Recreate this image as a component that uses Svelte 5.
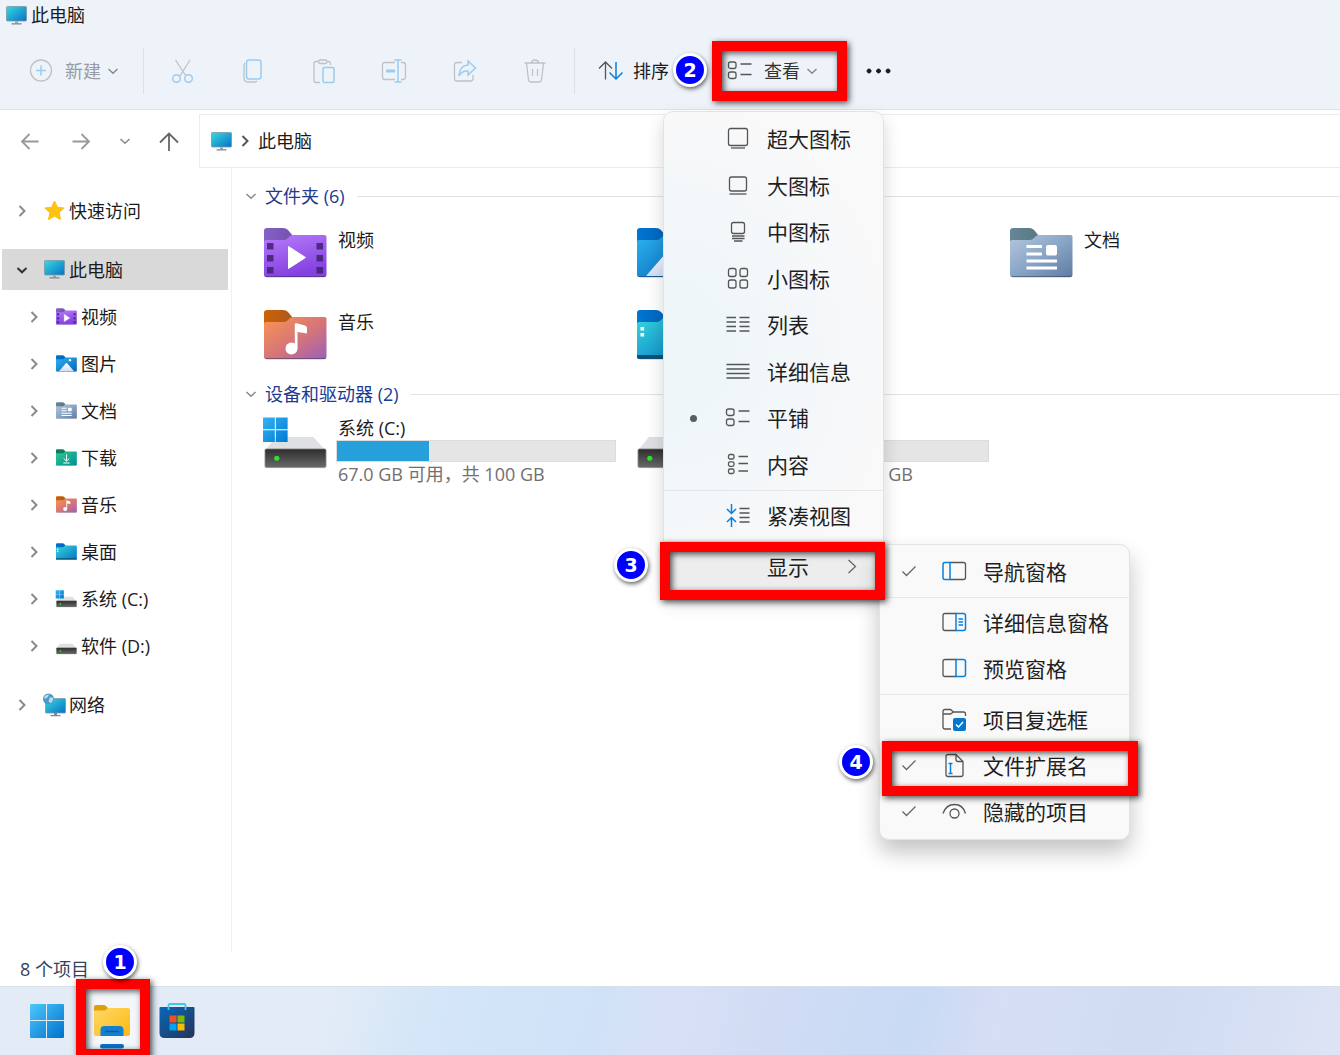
<script lang="ts">
	interface TreeItem {
		icon: string;
		label: string;
	}

	interface MenuItem {
		icon: string;
		label: string;
		mark?: string;
		step?: number;
	}

	const tools = [
		{ icon: 'cut', label: '剪切' },
		{ icon: 'copy', label: '复制' },
		{ icon: 'paste', label: '粘贴' },
		{ icon: 'rename', label: '重命名' },
		{ icon: 'share', label: '共享' },
		{ icon: 'trash', label: '删除' }
	];

	const tree: TreeItem[] = [
		{ icon: 'video', label: '视频' },
		{ icon: 'picture', label: '图片' },
		{ icon: 'document', label: '文档' },
		{ icon: 'download', label: '下载' },
		{ icon: 'music', label: '音乐' },
		{ icon: 'desktop', label: '桌面' },
		{ icon: 'system', label: '系统 (C:)' },
		{ icon: 'drive', label: '软件 (D:)' }
	];

	const folders: TreeItem[] = [
		{ icon: 'video', label: '视频' },
		{ icon: 'picture', label: '图片' },
		{ icon: 'document', label: '文档' },
		{ icon: 'music', label: '音乐' },
		{ icon: 'desktop', label: '桌面' }
	];

	const drives = [
		{ icon: 'system', label: '系统 (C:)', used: 33, info: '67.0 GB 可用，共 100 GB' },
		{ icon: 'drive', label: '软件 (D:)', used: 1, info: '137 GB 可用，共 137 GB' }
	];

	const layouts: MenuItem[] = [
		{ icon: 'xlarge', label: '超大图标' },
		{ icon: 'large', label: '大图标' },
		{ icon: 'medium', label: '中图标' },
		{ icon: 'small', label: '小图标' },
		{ icon: 'list', label: '列表' },
		{ icon: 'details', label: '详细信息' },
		{ icon: 'tiles', label: '平铺', mark: 'dot' },
		{ icon: 'content', label: '内容' }
	];

	const showGroups: MenuItem[][] = [
		[{ icon: 'navpane', label: '导航窗格', mark: 'check' }],
		[
			{ icon: 'detailpane', label: '详细信息窗格' },
			{ icon: 'preview', label: '预览窗格' }
		],
		[
			{ icon: 'checkbox', label: '项目复选框' },
			{ icon: 'extension', label: '文件扩展名', mark: 'check', step: 4 },
			{ icon: 'eye', label: '隐藏的项目', mark: 'check' }
		]
	];
</script>

{#snippet chevron(dir: string)}
	<svg class="chevron" viewBox="0 0 12 12" width="12" height="12">
		{#if dir === 'down'}
			<path d="M1.5 4L6 8.3L10.5 4" />
		{:else}
			<path d="M3.5 1L8.5 6L3.5 11" />
		{/if}
	</svg>
{/snippet}

{#snippet monitor()}
	<svg class="monitor" viewBox="0 0 21 19" width="21" height="19">
		<rect x="0.5" y="0.5" width="20" height="14.5" rx="0.8" fill="url(#screen)" stroke="#7d98a6" stroke-width="0.8" />
		<path d="M9 15.4h3v2h-3z" fill="#9aa3aa" />
		<path d="M5.5 17.2h10v1.3h-10z" fill="#7c8890" />
	</svg>
{/snippet}

{#snippet fileIcon(name: string)}
	{#if name === 'system' || name === 'drive'}
		<svg class="file" viewBox="0 0 64 52">
			<path d="M12 21H50L63 35H1Z" fill="#dfe0e4" />
			<rect x="1" y="33" width="62" height="19" rx="1.5" fill="url(#disk)" stroke="#8b8b8b" stroke-width="0.8" />
			<circle cx="13" cy="42.500" r="2.600" fill="#2fe02f" />
			{#if name === 'system'}
				<path d="M-1 1H11V13H-1ZM12 1H24V13H12ZM-1 14H11V26H-1ZM12 14H24V26H12Z" fill="url(#win)" />
			{/if}
		</svg>
	{:else}
		<svg class="file" viewBox="0 0 63 50">
			<path d="M0 3Q0 0 3 0H19Q22 0 24 2L29 8V16H0Z" fill="url(#tab-{name})" />
			<path
				d="M0 13.500Q0 12 2 12H20C24 12 25 7 29 7H60.500Q62.500 7 62.500 9V46.500Q62.500 49 60 49H2.500Q0 49 0 46.500Z"
				fill="url(#body-{name})"
			/>
			<path d="M0.500 47Q1 49.300 3 49.300H60Q62 49.300 62.300 47Q62 48.200 60 48.200H3Q1 48.200 0.500 47Z" fill="#24304a" opacity="0.6" />
			{#if name === 'video'}
				<path d="M24.500 18.500L41.500 29.500L24.500 40.500Z" fill="#fff" stroke="#fff" stroke-linejoin="round" />
				<path
					d="M3 15h6.500v6.500H3zM3 27h6.500v6.500H3zM3 39h6.500v6.500H3zM52.500 15H59v6.500h-6.500zM52.500 27H59v6.500h-6.500zM52.500 39H59v6.500h-6.500z"
					fill="#42216f"
					opacity="0.85"
				/>
			{:else if name === 'picture'}
				<path d="M9 48L29 25Q31.500 22.500 34 25L54 48Z" fill="url(#peak)" />
				<circle cx="42" cy="15" r="3.500" fill="#fff" />
			{:else if name === 'document'}
				<path d="M16.500 17h15.500v3H16.500zM16.500 24.500h15.500v3H16.500zM16.500 31.500h30.500v3H16.500zM16.500 38.500h30.500v3H16.500z" fill="#fff" />
				<rect x="36" y="17" width="11" height="10.500" rx="2" fill="#fff" />
			{:else if name === 'download'}
				<path d="M31.500 16V35M23 28L31.500 36L40 28M22 41.500H41" fill="none" stroke="#fff" stroke-width="3" />
			{:else if name === 'music'}
				<circle cx="27.500" cy="38.500" r="6" fill="#fff" />
				<path d="M30.800 14Q31 13 32.500 13.300L41 15.500Q43 16 43 18V23.500L33.500 22V38.500H30.800Z" fill="#fff" />
			{:else if name === 'desktop'}
				<path d="M3.500 17h3.600v3.600H3.500zM3.500 23h3.600v3.600H3.500z" fill="#fff" />
				<path d="M0 45H62.500V46.500Q62.500 49 60 49H2.500Q0 49 0 46.500Z" fill="#0d5276" />
			{/if}
		</svg>
	{/if}
{/snippet}

{#snippet glyph(name: string)}
	<svg class="glyph" viewBox="0 0 26 26" width="26" height="26">
		{#if name === 'new'}
			<circle cx="13" cy="12.500" r="10.500" />
			<path class="accent" d="M13 7.500V17.500M8 12.500H18" />
		{:else if name === 'cut'}
			<path d="M5.500 2L16 18M20 2L10 18" />
			<circle class="accent" cx="6.500" cy="20.500" r="3.800" />
			<circle class="accent" cx="18.500" cy="20.500" r="3.800" />
		{:else if name === 'copy'}
			<path d="M5 5Q4 6 4 8V20Q4 24 8 24H14Q16 24 17 23" />
			<rect class="accent" x="6.500" y="2" width="14.500" height="19" rx="2.500" />
		{:else if name === 'paste'}
			<path d="M7.500 3.500H5Q3 3.500 3 5.500V22.500Q3 24.500 5 24.500H9M16 3.500H18Q19.500 3.500 19.500 5.500V7" />
			<rect x="7.500" y="2" width="8.500" height="3.500" rx="1.700" />
			<rect class="accent" x="12" y="9.500" width="11" height="15" rx="1.500" />
		{:else if name === 'rename'}
			<path d="M14 4.500H4Q1.500 4.500 1.500 7V19Q1.500 21.500 4 21.500H14M20 4.500H22Q24.500 4.500 24.500 7V19Q24.500 21.500 22 21.500H20" />
			<path class="accent" d="M17 2V24M13.500 2H20.500M13.500 24H20.500" />
			<path class="accent thick" d="M5 13H14" />
		{:else if name === 'share'}
			<path d="M10 4.500H5Q2.500 4.500 2.500 7V20.500Q2.500 23 5 23H18.500Q21 23 21 20.500V17" />
			<path class="accent" d="M16 3L23.500 10L16 17V13Q10 12.500 7 18Q7.500 7.500 16 7Z" />
		{:else if name === 'trash'}
			<path d="M2.500 5H23.500M9.500 4.500Q10 2 13 2Q16 2 16.500 4.500M4.500 5L6.500 22Q6.800 24 9 24H17Q19.200 24 19.500 22L21.500 5M10.500 11V18M15.500 11V18" />
		{:else if name === 'sort'}
			<path d="M7.500 21.500V4M1 10.500L7.500 4L14 10.500" />
			<path class="accent" d="M18 4V21M11.500 14.500L18 21L24.500 14.500" />
		{:else if name === 'tiles'}
			<rect x="1.500" y="4" width="7.500" height="6.500" rx="2" />
			<rect x="1.500" y="14" width="7.500" height="6.500" rx="2" />
			<path d="M13.500 6H24.500M13.500 16.500H24.500" />
		{:else if name === 'xlarge'}
			<rect x="3.500" y="2.500" width="19" height="17" rx="2" />
			<path d="M6 22H20" />
		{:else if name === 'large'}
			<rect x="4.500" y="4" width="17" height="14" rx="2" />
			<path d="M4.500 21H21.500" />
		{:else if name === 'medium'}
			<rect x="6.500" y="3.500" width="13" height="11" rx="2" />
			<path d="M7 17H19.500M7 19.500H19.500M9 22H17.500" />
		{:else if name === 'small'}
			<rect x="3.500" y="2.500" width="7.500" height="8" rx="2" />
			<rect x="15" y="2.500" width="7.500" height="8" rx="2" />
			<rect x="3.500" y="14" width="7.500" height="8" rx="2" />
			<rect x="15" y="14" width="7.500" height="8" rx="2" />
		{:else if name === 'list'}
			<path d="M1.500 5.500H11M14.500 5.500H24.500M1.500 10H11M14.500 10H24.500M1.500 14.500H11M14.500 14.500H24.500M1.500 19H11M14.500 19H24.500" />
		{:else if name === 'details'}
			<path d="M1.500 5.500H24.500M1.500 10H24.500M1.500 14.500H24.500M1.500 19H24.500" />
		{:else if name === 'content'}
			<rect x="3.500" y="2.500" width="5.500" height="4.500" rx="1.500" />
			<rect x="3.500" y="9.800" width="5.500" height="4.500" rx="1.500" />
			<rect x="3.500" y="17" width="5.500" height="4.500" rx="1.500" />
			<path d="M13.500 4.500H23M13.500 11.500H23M13.500 19H23" />
		{:else if name === 'compact'}
			<path class="accent" d="M6.500 1V10M2 6L6.500 10.500L11 6M6.500 24V15M2 19L6.500 14.500L11 19" />
			<path d="M14.500 5.500H24.500M14.500 10H24.500M14.500 14.500H24.500M14.500 19H24.500" />
		{:else if name === 'navpane'}
			<path d="M9 3.500H22.500Q24.500 3.500 24.500 5.500V18.500Q24.500 20.500 22.500 20.500H9" />
			<path class="accent" d="M9 3.500V20.500H4Q2 20.500 2 18.500V5.500Q2 3.500 4 3.500Z" />
		{:else if name === 'preview' || name === 'detailpane'}
			<path d="M15 3.500H4Q2 3.500 2 5.500V18.500Q2 20.500 4 20.500H15" />
			<path class="accent" d="M15 3.500H22.500Q24.500 3.500 24.500 5.500V18.500Q24.500 20.500 22.500 20.500H15Z" />
			{#if name === 'detailpane'}
				<path class="accent" d="M17.500 9H22M17.500 12H22M17.500 15H22" />
			{/if}
		{:else if name === 'checkbox'}
			<path d="M10 22H4Q2 22 2 20V4.500Q2 2.500 4 2.500H9.500L12.500 5H22.500Q24.500 5 24.500 7V9M2 7H9.500L12.500 5" />
			<rect x="12" y="11" width="13" height="13" rx="2" fill="#0078d4" stroke="none" />
			<path d="M15 17.500L17.500 20L22 15" class="inverse" />
		{:else if name === 'extension'}
			<path d="M15 1.500H7Q5 1.500 5 3.500V21.500Q5 23.500 7 23.500H20Q22 23.500 22 21.500V8.500L15 1.500V6.500Q15 8.500 17 8.500H22" />
			<path class="accent" d="M9.500 10.500V20.500M7.500 10.500H11.500M7.500 20.500H11.500" />
		{:else if name === 'eye'}
			<path d="M2 14.500Q5 5.500 13.500 5.500Q22 5.500 24.500 14.500" />
			<circle cx="13.500" cy="14.500" r="4.500" />
		{:else if name === 'back'}
			<path d="M21.500 13.500H5M12.500 6L5 13.500L12.500 21" />
		{:else if name === 'forward'}
			<path d="M4.500 13.500H21M13.500 6L21 13.500L13.500 21" />
		{:else if name === 'up'}
			<path d="M13 23V5.500M4 14.500L13 5.500L22 14.500" />
		{:else if name === 'more'}
			<path class="solid" d="M3 11a2 2 0 1 0 .1 0zM12.500 11a2 2 0 1 0 .1 0zM22 11a2 2 0 1 0 .1 0z" />
		{/if}
	</svg>
{/snippet}

{#snippet menuRow(item: MenuItem)}
	<button class="menu-item" role="menuitem">
		<span class="mark">
			{#if item.mark === 'dot'}
				<i class="dot"></i>
			{:else if item.mark === 'check'}
				<svg viewBox="0 0 16 16" width="16" height="16"><path d="M1.500 7.500L5.500 11.500L14.500 2.500" /></svg>
			{/if}
		</span>
		{@render glyph(item.icon)}
		<span>{item.label}</span>
	</button>
{/snippet}

<svg class="defs" width="0" height="0" aria-hidden="true">
	<defs>
		<linearGradient id="screen" x1="0" y1="0" x2="1" y2="1"><stop stop-color="#36dbe0" /><stop offset="1" stop-color="#0870c4" /></linearGradient>
		<linearGradient id="disk" x1="0" y1="0" x2="0" y2="1"><stop stop-color="#2d2d2d" /><stop offset="1" stop-color="#6a6a6a" /></linearGradient>
		<linearGradient id="win" x1="0" y1="0" x2="1" y2="1"><stop stop-color="#35b5f2" /><stop offset="1" stop-color="#0078d4" /></linearGradient>
		<linearGradient id="peak" x1="0" y1="0" x2="0" y2="1"><stop stop-color="#fff" /><stop offset="1" stop-color="#d3def5" /></linearGradient>
		<linearGradient id="tab-video"><stop stop-color="#8362c6" /><stop offset="1" stop-color="#7950ad" /></linearGradient>
		<linearGradient id="body-video" x1="0" y1="0" x2="0.3" y2="1"><stop stop-color="#b57bfa" /><stop offset="1" stop-color="#8541e0" /></linearGradient>
		<linearGradient id="tab-picture"><stop stop-color="#0075d2" /><stop offset="1" stop-color="#0664ba" /></linearGradient>
		<linearGradient id="body-picture" x1="0" y1="0" x2="1" y2="1"><stop stop-color="#2bb2f0" /><stop offset="1" stop-color="#0a63b8" /></linearGradient>
		<linearGradient id="tab-document"><stop stop-color="#668797" /><stop offset="1" stop-color="#597682" /></linearGradient>
		<linearGradient id="body-document" x1="0" y1="0" x2="1" y2="1"><stop stop-color="#b5c6dc" /><stop offset="0.5" stop-color="#89a6c7" /><stop offset="1" stop-color="#5f7ba2" /></linearGradient>
		<linearGradient id="tab-download"><stop stop-color="#0d7d5c" /><stop offset="1" stop-color="#0d7d5c" /></linearGradient>
		<linearGradient id="body-download" x1="0" y1="0" x2="1" y2="1"><stop stop-color="#35c78e" /><stop offset="1" stop-color="#008f94" /></linearGradient>
		<linearGradient id="tab-music"><stop stop-color="#cb6308" /><stop offset="1" stop-color="#ad5a19" /></linearGradient>
		<linearGradient id="body-music" x1="0" y1="0" x2="1" y2="1"><stop stop-color="#fb954f" /><stop offset="0.55" stop-color="#d4747a" /><stop offset="1" stop-color="#9b60b8" /></linearGradient>
		<linearGradient id="tab-desktop"><stop stop-color="#0075d2" /><stop offset="1" stop-color="#0664ba" /></linearGradient>
		<linearGradient id="body-desktop" x1="0" y1="0" x2="1" y2="1"><stop stop-color="#34d7dc" /><stop offset="1" stop-color="#0873c4" /></linearGradient>
		<linearGradient id="start" x1="0" y1="0" x2="1" y2="1"><stop stop-color="#4cc9fb" /><stop offset="1" stop-color="#0070cc" /></linearGradient>
		<linearGradient id="yellow" x1="0" y1="0" x2="1" y2="1"><stop stop-color="#ffd968" /><stop offset="1" stop-color="#fbb912" /></linearGradient>
		<linearGradient id="bag" x1="0" y1="0" x2="1" y2="1"><stop stop-color="#0868b8" /><stop offset="1" stop-color="#263258" /></linearGradient>
	</defs>
</svg>

<div class="screen" lang="zh-CN">
	<header class="window-head">
		<div class="title">{@render monitor()}<span>此电脑</span></div>
		<div class="toolbar">
			<button class="tool disabled">
				{@render glyph('new')}<span>新建</span>{@render chevron('down')}
			</button>
			<i class="divider"></i>
			<div class="tool-group disabled">
				{#each tools as tool}
					<button class="tool" aria-label={tool.label}>{@render glyph(tool.icon)}</button>
				{/each}
			</div>
			<i class="divider"></i>
			<button class="tool sort">{@render glyph('sort')}<span>排序</span></button>
			<div class="view">
				<button class="tool">
					{@render glyph('tiles')}<span>查看</span>{@render chevron('down')}
				</button>
				<div class="frame frame-view"></div>
				<b class="badge badge-view">2</b>

				<div class="menu" role="menu">
					<div class="layouts">
						{#each layouts as item (item.icon)}
							{@render menuRow(item)}
						{/each}
					</div>
					<hr />
					{@render menuRow({ icon: 'compact', label: '紧凑视图' })}
					<hr />
					<div class="sub">
						<button class="menu-item active" role="menuitem">
							<span class="mark"></span>
							<span class="glyph"></span>
							<span class="grow">显示</span>
							<svg viewBox="0 0 14 16" width="14" height="16"><path d="M3.500 1L10.500 7.500L3.500 14" /></svg>
						</button>
						<div class="menu submenu" role="menu">
							{#each showGroups as group, i}
								{#if i > 0}<hr />{/if}
								{#each group as item (item.icon)}
									<div class="sub">
										{@render menuRow(item)}
										{#if item.step}
											<div class="frame frame-ext"></div>
											<b class="badge badge-ext">{item.step}</b>
										{/if}
									</div>
								{/each}
							{/each}
						</div>
						<div class="frame frame-show"></div>
						<b class="badge badge-show">3</b>
					</div>
				</div>
			</div>
			<button class="tool more" aria-label="更多">{@render glyph('more')}</button>
		</div>
	</header>

	<nav class="nav-row">
		<div class="nav-buttons">
			<button aria-label="后退">{@render glyph('back')}</button>
			<button aria-label="前进">{@render glyph('forward')}</button>
			<button class="recent" aria-label="最近">{@render chevron('down')}</button>
			<button class="up" aria-label="向上">{@render glyph('up')}</button>
		</div>
		<div class="address">
			{@render monitor()}
			{@render chevron('right')}
			<button>此电脑</button>
		</div>
	</nav>

	<main>
		<aside>
			<button class="tree-item">
				{@render chevron('right')}
				<svg class="star" viewBox="0 0 21 21" width="21" height="21">
					<path d="M10.500 1L13.400 7.200L20.200 8L15.200 12.700L16.500 19.600L10.500 16.200L4.500 19.600L5.800 12.700L0.800 8L7.600 7.200Z" fill="#ffc20e" stroke="#ffc20e" stroke-linejoin="round" />
				</svg>
				<span>快速访问</span>
			</button>
			<button class="tree-item selected">
				{@render chevron('down')}{@render monitor()}<span>此电脑</span>
			</button>
			<ul>
				{#each tree as item (item.icon)}
					<li>
						<button class="tree-item child">
							{@render chevron('right')}{@render fileIcon(item.icon)}<span>{item.label}</span>
						</button>
					</li>
				{/each}
			</ul>
			<button class="tree-item">
				{@render chevron('right')}
				<svg class="network" viewBox="0 0 24 24" width="24" height="24">
					<rect x="3.500" y="5.500" width="20" height="14.500" rx="0.8" fill="url(#screen)" stroke="#7d98a6" stroke-width="0.8" />
					<path d="M12 20h3v2h-3zM8.500 22h10v1.300h-10z" fill="#7c8890" />
					<circle cx="6.500" cy="6" r="5.500" fill="#4a9ac6" />
					<path d="M2 4Q4 1 7 1.500L6 4L3 6ZM8 4L11.500 5Q11 9 8.500 10.500L6.500 8Z" fill="#b9dcea" />
				</svg>
				<span>网络</span>
			</button>
		</aside>

		<section class="content">
			<h2>{@render chevron('down')}<span>文件夹 (6)</span></h2>
			<div class="grid folders">
				{#each folders as folder (folder.icon)}
					<div class="tile">
						{@render fileIcon(folder.icon)}
						<span class="name">{folder.label}</span>
					</div>
				{/each}
			</div>
			<h2>{@render chevron('down')}<span>设备和驱动器 (2)</span></h2>
			<div class="grid">
				{#each drives as drive (drive.icon)}
					<div class="tile drive">
						{@render fileIcon(drive.icon)}
						<div class="drive-info">
							<span class="name">{drive.label}</span>
							<div class="bar"><div class="used" style="width: {drive.used}%"></div></div>
							<span class="space">{drive.info}</span>
						</div>
					</div>
				{/each}
			</div>
		</section>
	</main>

	<footer class="status">8 个项目</footer>

	<div class="taskbar">
		<button aria-label="开始">
			<svg viewBox="0 0 36 36" width="36" height="36">
				<path d="M2 1H17V17H1V2Q1 1 2 1ZM18 1H34Q35 1 35 2V17H18ZM1 18H17V35H2Q1 35 1 34ZM18 18H35V34Q35 35 34 35H18Z" fill="url(#start)" />
			</svg>
		</button>
		<button class="running" aria-label="文件资源管理器">
			<svg viewBox="0 0 36 36" width="36" height="36">
				<path d="M0 6V4Q0 2 2 2H9.500Q11 2 12 3L14.500 5.500V10H0Z" fill="#dfa007" />
				<path d="M0 8.500Q0 7.500 1 7.500H11L14 5H34Q36 5 36 7V31Q36 33 34 33H2Q0 33 0 31Z" fill="url(#yellow)" />
				<path d="M6.500 33V27Q6.500 23 10.500 23H25.500Q29.500 23 29.500 27V33Z" fill="#1380cf" />
				<path d="M11 28.500H25" stroke="#0b5ba3" stroke-width="1.500" />
				<rect x="6" y="41" width="24" height="4.500" rx="2.200" fill="#0b70cb" />
			</svg>
			<i class="frame frame-task"></i>
			<b class="badge badge-task">1</b>
		</button>
		<button aria-label="应用商店">
			<svg viewBox="0 0 36 36" width="36" height="36">
				<path d="M0.500 5Q0.500 4 1.500 4H34.500Q35.500 4 35.500 5V30Q35.500 35 30.500 35H5.500Q0.500 35 0.500 30Z" fill="url(#bag)" />
				<path d="M9.500 7V2.500Q9.500 1 11 1H25Q26.500 1 26.500 2.500V7" fill="none" stroke="#3ccbf0" stroke-width="1.800" />
				<path d="M10.500 12.500h7v7h-7z" fill="#f25022" />
				<path d="M18.500 12.500h7v7h-7z" fill="#7fba00" />
				<path d="M10.500 20.500h7v7h-7z" fill="#00a4ef" />
				<path d="M18.500 20.500h7v7h-7z" fill="#ffb900" />
			</svg>
		</button>
	</div>
</div>

<style>
	:global(body) {
		margin: 0;
	}

	.screen {
		display: flex;
		flex-direction: column;
		min-height: 100vh;
		overflow: hidden;
		background: #fff;
		color: #1b1b1b;
		font-family: 'Open Sans', 'Noto Sans CJK SC', sans-serif;
		font-size: 18px;
		line-height: 24px;
	}

	.defs {
		position: absolute;
	}

	button {
		display: flex;
		align-items: center;
		padding: 0;
		border: 0;
		background: none;
		color: inherit;
		font: inherit;
		text-align: left;
	}

	svg {
		flex: none;
		display: block;
		overflow: visible;
	}

	.glyph {
		flex: none;
		width: 26px;
		fill: none;
		stroke: #555;
		stroke-width: 1.3;
	}

	.glyph .accent {
		stroke: #0a7fdb;
		stroke-width: 1.5;
	}

	.glyph .thick {
		stroke-width: 3;
	}

	.glyph .inverse {
		stroke: #fff;
		stroke-width: 1.5;
	}

	.glyph .solid {
		fill: #1b1b1b;
		stroke: #1b1b1b;
		stroke-width: 1;
	}

	.chevron {
		fill: none;
		stroke: #8a8a8a;
		stroke-width: 1.5;
	}

	/* window head */
	.window-head {
		background: #eef3fa;
		border-bottom: 1px solid #dfe3e8;
	}

	.title {
		display: flex;
		align-items: center;
		gap: 4px;
		height: 30px;
		padding-left: 6px;
	}

	.toolbar {
		display: flex;
		align-items: center;
		box-sizing: border-box;
		height: 79px;
		padding: 2px 0 0 28px;
	}

	.tool {
		flex: none;
		gap: 11px;
	}

	.tool .chevron {
		margin-left: -5px;
	}

	.disabled {
		color: #989ba0;
	}

	.disabled .glyph {
		stroke: #bfc2c6;
	}

	.disabled .glyph .accent {
		stroke: #9accf0;
	}

	.divider {
		flex: none;
		width: 1px;
		height: 46px;
		margin: 0 24px;
		background: #dcdfe4;
	}

	.tool-group {
		display: flex;
		justify-content: space-between;
		flex: none;
		width: 378px;
		margin: 0 2px;
	}

	.sort {
		margin: 0 58px 0 -1px;
		gap: 9px;
	}

	.view {
		position: relative;
		display: flex;
		align-self: stretch;
		flex: none;
		color: #333;
	}

	.more {
		margin-left: 48px;
	}

	/* menus */
	.menu {
		position: absolute;
		z-index: 5;
		top: calc(100% + 2px);
		left: -64px;
		box-sizing: border-box;
		width: 221px;
		padding: 4px 0;
		border: 1px solid #e2e3e4;
		border-radius: 10px;
		background: radial-gradient(ellipse at 0 50%, #eff6f9 20%, #f9f9f9 75%);
		box-shadow: 0 8px 18px rgba(0, 0, 0, 0.16);
		color: #1f1f1f;
		font-size: 21px;
		line-height: 28px;
	}

	.submenu {
		top: 0;
		left: 215px;
		width: 251px;
		background: #f9f9f9;
		box-shadow: 0 12px 22px rgba(0, 0, 0, 0.24);
	}

	.layouts {
		display: grid;
		grid-auto-rows: 1fr;
		height: 372px;
	}

	.menu hr {
		margin: 2px 0;
		border: 0;
		border-top: 1px solid #e6e7e8;
	}

	.sub {
		position: relative;
	}

	.menu-item {
		width: 100%;
		height: 46px;
		padding-left: 19px;
		white-space: nowrap;
	}

	.menu-item .glyph {
		margin: 0 16px 0 22px;
	}

	.menu-item.active {
		padding-right: 24px;
		background: #ededed;
	}

	.menu-item > svg:last-child {
		fill: none;
		stroke: #666;
		stroke-width: 1.3;
	}

	.grow {
		flex: 1;
	}

	.mark {
		display: flex;
		justify-content: center;
		flex: none;
		width: 20px;
	}

	.mark svg {
		fill: none;
		stroke: #666;
		stroke-width: 1.3;
	}

	.dot {
		width: 7px;
		height: 7px;
		border-radius: 50%;
		background: #5c5c5c;
	}

	/* numbered step highlights */
	.frame {
		position: absolute;
		z-index: 6;
		box-sizing: border-box;
		border: 10px solid #f00;
		filter: drop-shadow(2px 2px 3px rgba(0, 0, 0, 0.7));
		pointer-events: none;
	}

	.badge {
		position: absolute;
		z-index: 7;
		box-sizing: border-box;
		width: 34px;
		height: 34px;
		border: 3px solid #fff;
		border-radius: 50%;
		background: #00f;
		box-shadow: 1px 2px 4px rgba(0, 0, 0, 0.6);
		color: #fff;
		font-family: 'DejaVu Sans', sans-serif;
		font-size: 19px;
		font-weight: 700;
		line-height: 28px;
		text-align: center;
	}

	.frame-view {
		top: 9px;
		left: -15px;
		width: 135px;
		height: 60px;
	}

	.badge-view {
		top: 21px;
		left: -54px;
	}

	.frame-show {
		top: -2px;
		left: -4px;
		width: 225px;
		height: 58px;
	}

	.badge-show {
		top: 4px;
		left: -50px;
	}

	.frame-ext {
		top: -2px;
		left: 2px;
		width: 256px;
		height: 55px;
	}

	.badge-ext {
		top: 2px;
		left: -41px;
	}

	.frame-task {
		top: -24px;
		left: -18px;
		width: 74px;
		height: 80px;
	}

	.badge-task {
		top: -58px;
		left: 9px;
	}

	/* address row */
	.nav-row {
		display: flex;
		align-items: center;
		padding-top: 4px;
	}

	.nav-buttons {
		display: flex;
		align-items: center;
		flex: none;
		width: 182px;
		padding-left: 17px;
		gap: 25px;
	}

	.nav-buttons .glyph {
		stroke: #999;
		stroke-width: 1.8;
	}

	.nav-buttons .up .glyph {
		stroke: #666;
	}

	.address {
		display: flex;
		align-items: center;
		flex: 1;
		height: 52px;
		padding-left: 11px;
		gap: 7px;
		border: 1px solid #ececec;
		border-right: 0;
	}

	.address .chevron {
		stroke: #555;
		stroke-width: 2;
	}

	/* navigation tree */
	main {
		display: flex;
		flex: 1;
	}

	aside {
		flex: none;
		box-sizing: border-box;
		width: 232px;
		padding: 19px 3px 0 2px;
		border-right: 1px solid #f0f0f0;
	}

	ul {
		margin: 3px 0 12px;
		padding: 0;
		list-style: none;
	}

	.tree-item {
		width: 100%;
		height: 47px;
		padding-left: 14px;
		gap: 4px;
	}

	.tree-item .chevron {
		margin-right: 12px;
		stroke-width: 2;
	}

	.tree-item.child {
		padding-left: 26px;
	}

	.tree-item.selected {
		height: 41px;
		margin-top: 15px;
		background: #d9d9d9;
	}

	.selected .chevron {
		stroke: #333;
	}

	.tree-item .file {
		width: 21px;
		height: 17px;
	}

	.network {
		margin: 0 -1px 0 -2px;
	}

	/* file area */
	.content {
		flex: 1;
		min-width: 0;
		overflow: hidden;
		padding: 16px 0 0 13px;
	}

	h2 {
		display: flex;
		align-items: center;
		margin: 0;
		gap: 8px;
		color: #213a8f;
		font-size: 18px;
		font-weight: 400;
	}

	h2::after {
		content: '';
		flex: 1;
		height: 1px;
		margin-left: 4px;
		background: #e3e3e3;
	}

	.grid {
		display: grid;
		grid-template-columns: repeat(3, 373px);
		padding-left: 19px;
	}

	.folders {
		grid-auto-rows: 82px;
		padding-top: 20px;
		margin-bottom: -10px;
	}

	.tile {
		display: flex;
		gap: 11px;
	}

	.tile .file {
		width: 63px;
		height: 50px;
	}

	.drive {
		gap: 9px;
		padding-top: 10px;
	}

	.tile.drive .file {
		height: 52px;
	}

	.drive-info {
		display: flex;
		flex-direction: column;
		width: 280px;
	}

	.drive-info span {
		padding-left: 2px;
	}

	.bar {
		box-sizing: border-box;
		height: 22px;
		background: #e5e5e5;
		border: 1px solid #dcdcdc;
	}

	.used {
		height: 100%;
		background: #26a0da;
	}

	.space {
		color: #707070;
	}

	.status {
		height: 34px;
		padding-left: 20px;
		color: #34435c;
		line-height: 34px;
	}

	.taskbar {
		display: flex;
		align-items: flex-start;
		box-sizing: border-box;
		height: 69px;
		padding: 16px 29px 0;
		gap: 29px;
		border-top: 1px solid #d7dfe8;
		background: linear-gradient(105deg, #e3ecf6 24%, #d4e6f8 32%, #cfe2f7 44%, #d8e0f6 50%, #d0dcf4 58%, #c9daf4 68%, #d6def4 74%, #d0dcf2 86%, #dde4f5);
	}

	.running {
		position: relative;
		background: #f3f7fc;
		box-shadow: 0 0 0 14px #f3f7fc;
	}
</style>
